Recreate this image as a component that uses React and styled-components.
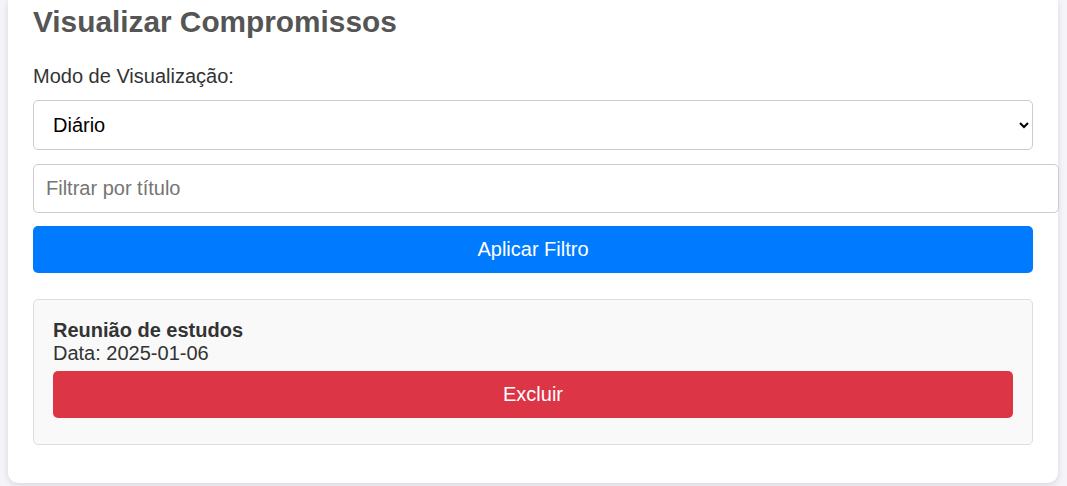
import styled, { createGlobalStyle } from 'styled-components'

const GlobalStyle = createGlobalStyle`
  html, body {
    margin: 0;
    padding: 0;
    background: #f4f4f9;
    font-family: 'Liberation Sans', Arial, sans-serif;
  }
`

const Page = styled.div`
  padding: 0 9px 3px 8px;
`

const Card = styled.section`
  background: #fff;
  border-radius: 0 0 10px 10px;
  box-shadow: 0 2px 6px rgba(0, 0, 0, 0.12);
  padding: 4px 25px 38px;
`

const Title = styled.h2`
  margin: 0 0 25px;
  font-size: 29.8px;
  line-height: 36px;
  color: #555;
`

const Label = styled.label`
  display: block;
  font-size: 20px;
  line-height: 23px;
  color: #333;
  margin-bottom: 12px;
`

const Select = styled.select`
  display: block;
  width: 100%;
  height: 50px;
  padding: 0 8px 0 15px;
  font-family: inherit;
  font-size: 20px;
  color: #000;
  background: #fff;
  border: 1px solid #ccc;
  border-radius: 5px;
  margin-bottom: 14px;
`

const Input = styled.input`
  display: block;
  width: 100%;
  padding: 12px;
  font-family: inherit;
  font-size: 20px;
  line-height: 23px;
  height: 23px;
  border: 1px solid #ccc;
  border-radius: 5px;
  margin-bottom: 13px;

  &::placeholder {
    color: #757575;
  }
`

const Button = styled.button`
  display: block;
  width: 100%;
  height: 47px;
  border: none;
  border-radius: 5px;
  background: ${(p) => (p.$danger ? '#dc3545' : '#007bff')};
  color: #fff;
  font-family: inherit;
  font-size: 20px;
  cursor: pointer;
`

const List = styled.div`
  margin-top: 26px;
`

const Item = styled.div`
  background: #f9f9f9;
  border: 1px solid #ddd;
  border-radius: 5px;
  padding: 19px 19px 26px;
`

const ItemTitle = styled.strong`
  display: block;
  font-size: 20px;
  line-height: 23px;
  color: #333;
`

const ItemDate = styled.span`
  display: block;
  font-size: 20px;
  line-height: 23px;
  color: #333;
  margin-bottom: 6px;
`

export default function App() {
  return (
    <>
      <GlobalStyle />
      <Page>
        <Card>
          <Title>Visualizar Compromissos</Title>
          <Label htmlFor="modo">Modo de Visualização:</Label>
          <Select id="modo" defaultValue="diario">
            <option value="diario">Diário</option>
            <option value="semanal">Semanal</option>
            <option value="mensal">Mensal</option>
          </Select>
          <Input type="text" placeholder="Filtrar por título" />
          <Button>Aplicar Filtro</Button>
          <List>
            <Item>
              <ItemTitle>Reunião de estudos</ItemTitle>
              <ItemDate>Data: 2025-01-06</ItemDate>
              <Button $danger>Excluir</Button>
            </Item>
          </List>
        </Card>
      </Page>
    </>
  )
}
